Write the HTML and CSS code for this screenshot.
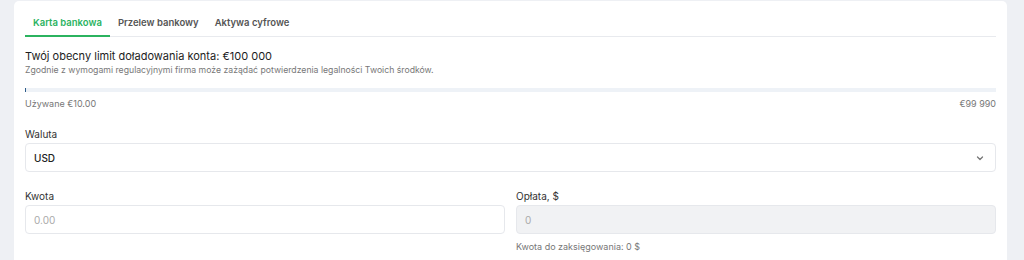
FILE: index.html
```html
<!DOCTYPE html>
<html lang="pl">
<head>
    <meta charset="UTF-8">
    <title>Doładowanie</title>
    <link rel="stylesheet" href="styles.css">
</head>
<body>
    <div class="page">
        <div class="card">
            <div class="tabs">
                <span class="tab active">Karta bankowa</span>
                <span class="tab">Przelew bankowy</span>
                <span class="tab">Aktywa cyfrowe</span>
            </div>

            <div class="limit">
                <div class="limit-title">Twój obecny limit doładowania konta: €100 000</div>
                <div class="limit-note">Zgodnie z wymogami regulacyjnymi firma może zażądać potwierdzenia legalności Twoich środków.</div>
                <div class="progress"><div class="progress-fill" style="width: 0.1%"></div></div>
                <div class="progress-labels">
                    <span>Używane €10.00</span>
                    <span>€99 990</span>
                </div>
            </div>

            <div class="field">
                <label class="label">Waluta</label>
                <div class="select">
                    <span>USD</span>
                    <svg width="10" height="10" viewBox="0 0 10 10"><path d="M2.5 4 L5 6.5 L7.5 4" fill="none" stroke="#777" stroke-width="1.3" stroke-linecap="round" stroke-linejoin="round"/></svg>
                </div>
            </div>

            <div class="row">
                <div class="field">
                    <label class="label">Kwota</label>
                    <div class="input placeholder">0.00</div>
                </div>
                <div class="field">
                    <label class="label">Opłata, $</label>
                    <div class="input disabled">0</div>
                    <div class="hint">Kwota do zaksięgowania: 0 $</div>
                </div>
            </div>
        </div>
    </div>
</body>
</html>
```

FILE: styles.css
```css
body {
    margin: 0;
    background: #eef0f4;
    font-family: Inter, "Noto Sans", sans-serif;
    color: #222;
}
.page {
    padding: 1px 17px 0 14px;
}
.card {
    background: #fff;
    border-radius: 5px 5px 0 0;
    padding: 0 11px;
    height: 259px;
}
.tabs {
    display: flex;
    border-bottom: 1px solid #e8eaee;
}
.tab {
    padding: 15px 8px 5px;
    line-height: 14px;
    font-size: 9.5px;
    font-weight: 600;
    color: #555;
    border-bottom: 2px solid transparent;
    margin-bottom: -1px;
}
.tab.active {
    color: #2bb35f;
    border-bottom-color: #2bb35f;
}
.limit {
    padding-top: 12px;
}
.limit-title {
    font-size: 11px;
    line-height: 15px;
    color: #1d1d1d;
}
.limit-note {
    font-size: 8.7px;
    line-height: 13px;
    color: #777;
}
.progress {
    margin-top: 11px;
    height: 4px;
    background: #eef2f7;
}
.progress-fill {
    height: 100%;
    background: #2f5c8a;
    min-width: 1px;
}
.progress-labels {
    display: flex;
    justify-content: space-between;
    font-size: 9px;
    line-height: 14px;
    color: #777;
    margin-top: 5px;
}
.field {
    display: flex;
    flex-direction: column;
}
.limit + .field {
    margin-top: 17px;
}
.label {
    font-size: 10px;
    line-height: 12px;
    color: #333;
    margin-bottom: 3px;
}
.select, .input {
    box-sizing: border-box;
    height: 29px;
    border: 1px solid #e6e8ec;
    border-radius: 4px;
    padding: 0 10px 0 8px;
    display: flex;
    align-items: center;
    font-size: 10px;
}
.select {
    justify-content: space-between;
    font-weight: 500;
    color: #222;
}
.row {
    display: grid;
    grid-template-columns: 1fr 1fr;
    gap: 11px;
    margin-top: 18px;
}
.placeholder {
    color: #aaa;
}
.disabled {
    background: #f1f2f4;
    color: #aaa;
}
.hint {
    font-size: 9px;
    line-height: 14px;
    color: #777;
    margin-top: 6px;
}
```
